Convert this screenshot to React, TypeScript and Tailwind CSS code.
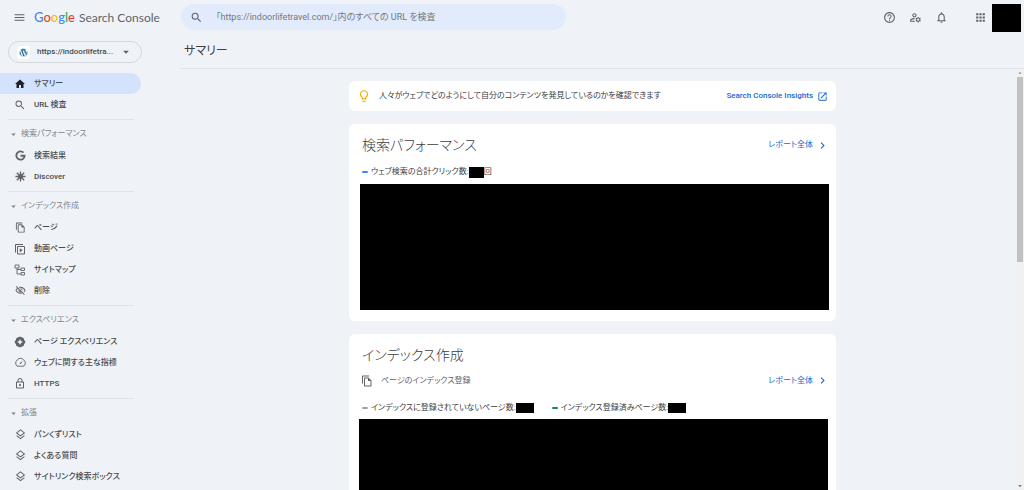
import React, {ReactNode} from 'react';
import clsx from 'clsx';
import {
  MdApps,
  MdArrowDropDown,
  MdArrowDropUp,
  MdChevronRight,
  MdHelpOutline,
  MdHome,
  MdLockOutline,
  MdMenu,
  MdNotificationsNone,
  MdOpenInNew,
  MdOutlineFileCopy,
  MdOutlineLightbulb,
  MdOutlineManageAccounts,
  MdOutlineVisibilityOff,
  MdSearch,
} from 'react-icons/md';
import {FaWordpress} from 'react-icons/fa';

interface NavItem {
  label: string;
  icon: ReactNode;
  active?: boolean;
}

interface NavGroup {
  title: string;
  items: NavItem[];
}

const topItems: NavItem[] = [
  {
    label: 'サマリー',
    icon: <MdHome className="size-3 text-[#202124]" />,
    active: true,
  },
  {label: 'URL 検査', icon: <MdSearch className="size-3" />},
];

const groups: NavGroup[] = [
  {
    title: '検索パフォーマンス',
    items: [
      {label: '検索結果', icon: <GoogleGIcon />},
      {label: 'Discover', icon: <DiscoverIcon />},
    ],
  },
  {
    title: 'インデックス作成',
    items: [
      {label: 'ページ', icon: <MdOutlineFileCopy className="size-[11px]" />},
      {label: '動画ページ', icon: <VideoPagesIcon />},
      {label: 'サイトマップ', icon: <SitemapIcon />},
      {label: '削除', icon: <MdOutlineVisibilityOff className="size-[11px]" />},
    ],
  },
  {
    title: 'エクスペリエンス',
    items: [
      {label: 'ページ エクスペリエンス', icon: <PageExperienceIcon />},
      {label: 'ウェブに関する主な指標', icon: <SpeedIcon />},
      {label: 'HTTPS', icon: <MdLockOutline className="size-[13px]" />},
    ],
  },
  {
    title: '拡張',
    items: [
      {label: 'パンくずリスト', icon: <LayersIcon />},
      {label: 'よくある質問', icon: <LayersIcon />},
      {label: 'サイトリンク検索ボックス', icon: <LayersIcon />},
    ],
  },
];

export default function App() {
  return (
    <div className="flex h-screen flex-col overflow-hidden bg-[#eff3f8] font-[Roboto,'Noto_Sans_CJK_JP',sans-serif] text-[8px] leading-3 text-[#3c4043] [font-feature-settings:'palt']">
      <Header />
      <div className="flex min-h-0 flex-1">
        <Sidebar />
        <div className="flex min-w-0 flex-1 flex-col">
          <h1 className="flex h-[35px] shrink-0 items-center border-b border-[#e0e4e8] pl-[3px] text-xs font-normal">
            サマリー
          </h1>
          <div className="flex min-h-0 flex-1">
            <main className="min-w-0 flex-1 overflow-hidden pt-3 pr-3">
              <div className="mx-auto flex max-w-[487px] flex-col gap-[13px]">
                <InsightsBanner />
                <PerformanceCard />
                <IndexingCard />
              </div>
            </main>
            <Scrollbar />
          </div>
        </div>
      </div>
    </div>
  );
}

function Header() {
  return (
    <header className="flex h-[34px] shrink-0 items-center pr-[3px] text-[#5f6368]">
      <div className="flex w-[181px] shrink-0 items-center pl-[13px]">
        <button aria-label="メニュー" className="mr-2">
          <MdMenu className="size-[13px]" />
        </button>
        <a
          href="#"
          className="flex items-baseline gap-1 font-[Lato,sans-serif] text-xs leading-5"
        >
          <span className="text-[13px] leading-5 font-medium">
            <span className="text-[#4285f4]">G</span>
            <span className="text-[#ea4335]">o</span>
            <span className="text-[#fbbc04]">o</span>
            <span className="text-[#4285f4]">g</span>
            <span className="text-[#34a853]">l</span>
            <span className="text-[#ea4335]">e</span>
          </span>
          <span>Search Console</span>
        </a>
      </div>
      <label className="flex h-[26px] w-[385px] items-center rounded-full bg-[#e1ebfc] pl-[9px]">
        <MdSearch className="size-[13px] shrink-0" />
        <input
          type="text"
          aria-label="URL を検査"
          placeholder="「https://indoorlifetravel.com/」内のすべての URL を検査"
          className="ml-[13px] min-w-0 flex-1 bg-transparent text-[9px] outline-none placeholder:text-[#74787d]"
        />
      </label>
      <div className="ml-auto flex items-center">
        <div className="flex items-center gap-[13px]">
          <button aria-label="ヘルプ">
            <MdHelpOutline className="size-[13px]" />
          </button>
          <button aria-label="ユーザー設定">
            <MdOutlineManageAccounts className="size-[13px]" />
          </button>
          <button aria-label="通知">
            <MdNotificationsNone className="size-[13px]" />
          </button>
        </div>
        <button aria-label="アプリ" className="mx-[5px] pl-[21px]">
          <MdApps className="size-[13px]" />
        </button>
        <div className="mt-[2px] h-7 w-[29px] bg-black" />
      </div>
    </header>
  );
}

function Sidebar() {
  return (
    <nav className="w-[181px] shrink-0 pt-[7px] text-[#474b4f]">
      <div className="relative ml-2 flex h-[22px] w-[134px] items-center rounded-full border border-[#d3d8dd]">
        <span className="ml-2 flex size-[13px] items-center justify-center rounded-sm bg-white">
          <FaWordpress className="size-[9px] text-[#21759b]" />
        </span>
        <select
          aria-label="プロパティ"
          className="h-full min-w-0 flex-1 appearance-none bg-transparent pl-[7px] font-medium outline-none"
        >
          <option>https://indoorlifetra...</option>
        </select>
        <MdArrowDropDown className="pointer-events-none absolute right-2 size-[14px] text-[#5f6368]" />
      </div>
      <div className="mt-[10px]">
        {topItems.map(item => (
          <NavLink key={item.label} item={item} />
        ))}
      </div>
      {groups.map(group => (
        <div key={group.title}>
          <div className="mt-1 mr-[47px] mb-1 ml-2 border-t border-[#e0e4e8]" />
          <button className="mb-px flex h-5 items-center pl-2 text-[#80868b]">
            <MdArrowDropDown className="mr-[2px] size-[11px]" />
            {group.title}
          </button>
          {group.items.map(item => (
            <NavLink key={item.label} item={item} />
          ))}
        </div>
      ))}
    </nav>
  );
}

function NavLink({item}: {item: NavItem}) {
  return (
    <a
      href="#"
      aria-current={item.active ? 'page' : undefined}
      className={clsx(
        'mr-10 flex h-[21px] items-center rounded-r-full pl-[14px] font-medium whitespace-nowrap',
        item.active && 'bg-[#d3e3fd]',
      )}
    >
      <span className="mr-2 flex size-3 items-center justify-center text-[#5f6368]">
        {item.icon}
      </span>
      {item.label}
    </a>
  );
}

function InsightsBanner() {
  return (
    <section className="flex h-[30px] items-center rounded-md bg-white pr-2 pl-2">
      <MdOutlineLightbulb className="mr-2 size-[14px] text-[#f9ab00]" />
      人々がウェブでどのようにして自分のコンテンツを発見しているのかを確認できます
      <a
        href="#"
        className="ml-auto flex items-center gap-1 font-medium text-[#1967d2]"
      >
        Search Console Insights
        <MdOpenInNew className="size-[11px]" />
      </a>
    </section>
  );
}

function PerformanceCard() {
  return (
    <section className="rounded-md bg-white pt-[11px] pb-[11px]">
      <div className="flex items-center pr-[7px] pl-[13px]">
        <CardTitle>検索パフォーマンス</CardTitle>
        <ReportLink />
      </div>
      <div className="mt-[11px] flex pl-[13px]">
        <Legend color="bg-[#4285f4]" label="ウェブ検索の合計クリック数:">
          <span className="h-[11px] w-[15px] bg-black" />回
        </Legend>
      </div>
      <div className="mt-[6px] mr-[7px] ml-[11px] h-[126px] bg-black" />
    </section>
  );
}

function IndexingCard() {
  return (
    <section className="rounded-md bg-white pt-[11px] pb-[11px]">
      <div className="pl-[13px]">
        <CardTitle>インデックス作成</CardTitle>
      </div>
      <div className="mt-[9px] flex items-center pr-[7px] pl-3 text-[#5f6368]">
        <MdOutlineFileCopy className="mr-2 size-3" />
        <h3>ページのインデックス登録</h3>
        <ReportLink />
      </div>
      <div className="mt-[15px] flex gap-[18px] pl-[13px]">
        <Legend
          color="bg-[#9aa0a6]"
          label="インデックスに登録されていないページ数:"
        >
          <span className="h-[10px] w-[18px] bg-black" />
        </Legend>
        <Legend color="bg-[#0d904f]" label="インデックス登録済みページ数:">
          <span className="h-[10px] w-[18px] bg-black" />
        </Legend>
      </div>
      <div className="mt-[5px] mr-2 ml-[10px] h-[126px] bg-black" />
    </section>
  );
}

function CardTitle({children}: {children: ReactNode}) {
  return (
    <h2 className="text-sm leading-5 font-light text-[#3c4043]">{children}</h2>
  );
}

function ReportLink() {
  return (
    <a href="#" className="ml-auto flex items-center gap-[3px] text-[#1967d2]">
      レポート全体
      <MdChevronRight className="size-[13px]" />
    </a>
  );
}

interface LegendProps {
  color: string;
  label: string;
  children: ReactNode;
}
function Legend({color, label, children}: LegendProps) {
  return (
    <div className="flex items-center">
      <span className={clsx('mr-[3px] h-[2px] w-[6px] rounded-full', color)} />
      {label}
      {children}
    </div>
  );
}

function Scrollbar() {
  return (
    <div
      aria-hidden
      className="flex w-2 shrink-0 flex-col items-center bg-[#f1f1f1] text-[#505050]"
    >
      <MdArrowDropUp className="size-2 text-[#8a8a8a]" />
      <div className="h-[185px] w-[6px] bg-[#c1c1c1]" />
      <MdArrowDropDown className="mt-auto size-2" />
    </div>
  );
}

function GoogleGIcon() {
  return (
    <svg viewBox="0 0 24 24" className="size-[11px]" fill="none">
      <path
        d="M18.500 5.800A9 9 0 1 0 21 12.600h-9"
        stroke="currentColor"
        strokeWidth="4"
      />
    </svg>
  );
}

function DiscoverIcon() {
  return (
    <svg viewBox="0 0 24 24" className="size-[11px]" fill="none">
      <path
        d="M12 1v22M1 12h22M4 4l16 16M20 4L4 20"
        stroke="currentColor"
        strokeWidth="3"
      />
      <circle cx="12" cy="12" r="5" fill="currentColor" />
    </svg>
  );
}

function LayersIcon() {
  return (
    <svg viewBox="0 0 24 24" className="size-[11px]" fill="none">
      <path
        d="M12 2l8.500 6.500L12 15 3.500 8.500zM3.500 14.500L12 21l8.500-6.500"
        stroke="currentColor"
        strokeWidth="2.200"
      />
    </svg>
  );
}

function VideoPagesIcon() {
  return (
    <svg viewBox="0 0 24 24" className="size-3" fill="none">
      <path
        d="M3 19V3h15M7 7h14v15H7z"
        stroke="currentColor"
        strokeWidth="2"
        strokeLinejoin="round"
      />
      <path d="M11.500 10.500v8l6-4z" fill="currentColor" />
    </svg>
  );
}

function SitemapIcon() {
  return (
    <svg viewBox="0 0 24 24" className="size-3" fill="none">
      <path
        d="M2 2h8v6H2zM14 8h7v5h-7zM14 17h7v5h-7zM6 8v12h8M6 11h8"
        stroke="currentColor"
        strokeWidth="1.800"
      />
    </svg>
  );
}

function PageExperienceIcon() {
  return (
    <svg viewBox="0 0 24 24" className="size-3">
      <path
        fill="currentColor"
        fillRule="evenodd"
        d="M12 1l3 1.500L19 4l1.500 4L23 12l-2.500 4-1.500 4-4 1.500L12 23l-3-1.500L5 20l-1.500-4L1 12l2.500-4L5 4l4-1.500zM12 6l-2 4-4 2 4 2 2 4 2-4 4-2-4-2z"
      />
    </svg>
  );
}

function SpeedIcon() {
  return (
    <svg viewBox="0 0 24 24" className="size-[11px]" fill="none">
      <path
        d="M4.500 20a10 10 0 1 1 15 0z"
        stroke="currentColor"
        strokeWidth="2"
        strokeLinejoin="round"
      />
      <path d="M10.500 13l7-5-5 7a1.500 1.500 0 0 1-2-2z" fill="currentColor" />
    </svg>
  );
}
